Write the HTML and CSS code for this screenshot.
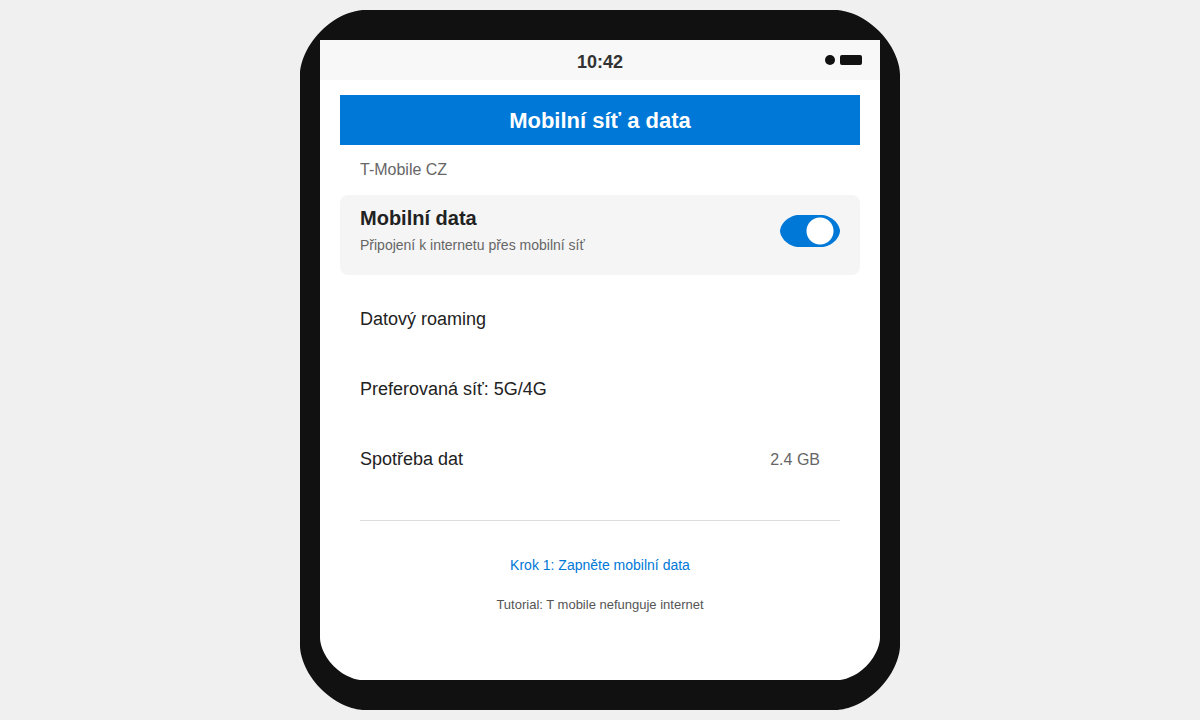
FILE: index.html
```html
<!DOCTYPE html>
<html lang="cs">
<head>
    <meta charset="UTF-8">
    <meta name="viewport" content="width=device-width, initial-scale=1.0">
    <title>Mobilní síť a data</title>
    <link rel="stylesheet" href="styles.css">
</head>
<body>
    <div class="phone">
        <div class="screen">
            <div class="status">
                <span class="time">10:42</span>
                <svg class="status-icons" width="37" height="10" viewBox="0 0 37 10">
                    <circle cx="5" cy="5" r="5"/>
                    <rect x="15" width="22" height="10" rx="2"/>
                </svg>
            </div>
            <div class="content">
                <h1 class="title">Mobilní síť a data</h1>
                <p class="operator">T-Mobile CZ</p>
                <div class="card">
                    <label class="card-text" for="data">
                        <span class="card-title">Mobilní data</span>
                        <span class="card-desc">Připojení k internetu přes mobilní síť</span>
                    </label>
                    <input class="switch" type="checkbox" id="data" checked>
                </div>
                <ul class="list">
                    <li class="item">Datový roaming</li>
                    <li class="item">Preferovaná síť: 5G/4G</li>
                    <li class="item">Spotřeba dat <span class="value">2.4 GB</span></li>
                </ul>
                <div class="footer">
                    <p class="step">Krok 1: Zapněte mobilní data</p>
                    <p class="tutorial">Tutorial: T mobile nefunguje internet</p>
                </div>
            </div>
        </div>
    </div>
</body>
</html>
```
FILE: styles.css
```css
* {
    margin: 0;
    padding: 0;
    box-sizing: border-box;
}
body {
    padding: 10px;
    background-color: #f0f0f0;
    color: #222;
    font-family: "Liberation Sans", Arial, sans-serif;
}
.phone {
    max-width: 600px;
    margin: 0 auto;
    padding: 30px 20px;
    border-radius: 64px;
    corner-shape: superellipse(0.8);
    background-color: #111;
}
.screen {
    padding-bottom: 55px;
    border-radius: 0 0 42px 42px;
    corner-shape: superellipse(0.8);
    background-color: #fff;
}
.status {
    display: grid;
    grid-template-columns: 1fr auto 1fr;
    align-items: center;
    height: 40px;
    padding: 0 18px;
    background-color: #f8f8f8;
}
.time {
    grid-column: 2;
    padding-top: 3px;
    color: #333;
    font-size: 18px;
    font-weight: bold;
    line-height: 20px;
}
.status-icons {
    justify-self: end;
    fill: #111;
}
.content {
    padding: 15px 20px 0;
}
.title {
    padding-top: 2px;
    background-color: #0078d7;
    color: #fff;
    font-size: 22px;
    line-height: 48px;
    text-align: center;
}
.operator {
    padding: 0 20px;
    color: #666;
    font-size: 16px;
    line-height: 50px;
}
.card {
    display: flex;
    justify-content: space-between;
    align-items: flex-start;
    padding: 10px 20px 18px;
    border-radius: 8px;
    background-color: #f5f5f5;
}
.card-title {
    display: block;
    font-size: 20px;
    font-weight: bold;
    line-height: 26px;
}
.card-desc {
    display: block;
    padding-top: 2px;
    color: #666;
    font-size: 14px;
    line-height: 24px;
}
.switch {
    flex: none;
    appearance: none;
    width: 60px;
    height: 32px;
    margin-top: 10px;
    border-radius: 18px / 16px;
    corner-shape: superellipse(0.8);
    background: radial-gradient(circle at 40px 16px, #fff 13px, #0078d7 14px);
}
.list {
    padding: 9px 20px 11px;
    list-style: none;
}
.item {
    display: flex;
    justify-content: space-between;
    align-items: baseline;
    padding-right: 20px;
    font-size: 18px;
    line-height: 70px;
}
.value {
    color: #666;
    font-size: 16px;
}
.footer {
    margin: 14px 20px 0;
    padding-top: 24px;
    border-top: 1px solid #ddd;
    text-align: center;
    line-height: 40px;
}
.step {
    color: #0078d7;
    font-size: 14px;
}
.tutorial {
    color: #555;
    font-size: 13px;
}
```
